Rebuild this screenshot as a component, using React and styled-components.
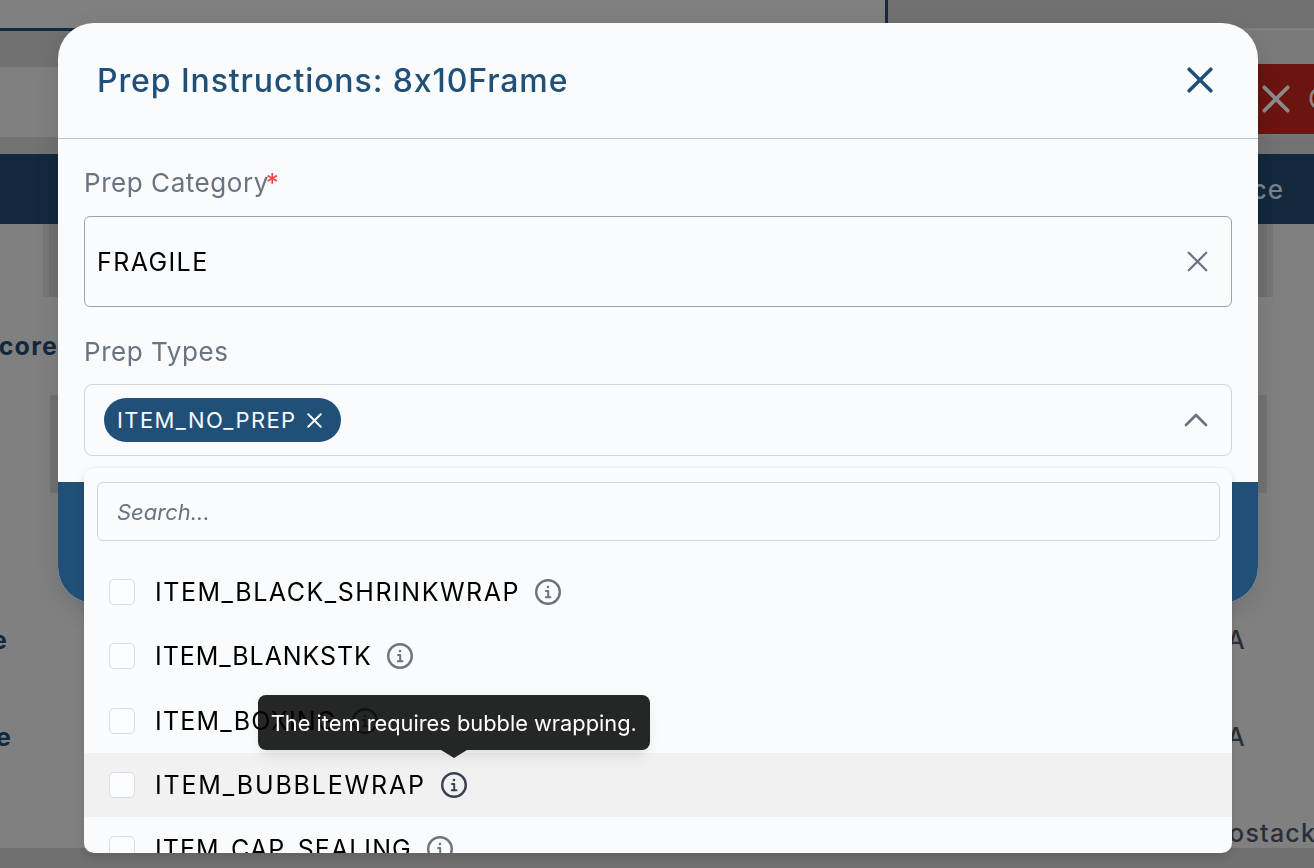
import React from 'react'
import styled, { createGlobalStyle } from 'styled-components'

const GlobalStyle = createGlobalStyle`
  html, body {
    margin: 0;
    height: 100%;
    overflow: hidden;
    background: #808080;
    font-family: Inter, "Liberation Sans", sans-serif;
  }
`

const Page = styled.div`
  width: 1314px;
  height: 868px;
  overflow: hidden;
  display: flex;
  flex-direction: column;
  background: #808080;
`

const TopStrip = styled.div`
  height: 28px;
  display: grid;
  grid-template-columns: 885px 3px 1fr;
  flex: none;
`
const TopLeft = styled.div`
  background: #808080;
`
const TopDivider = styled.div`
  background: #132a40;
`
const TopRight = styled.div`
  background: #717171;
`
const NavLine = styled.div`
  height: 3px;
  width: 200px;
  background: #132a40;
  flex: none;
`
const Band = styled.div`
  height: ${p => p.$h}px;
  background: ${p => p.$bg || '#808080'};
  flex: none;
`
const Toolbar = styled.div`
  height: 70px;
  flex: none;
  display: flex;
  justify-content: flex-end;
  align-items: flex-start;
  background: #808080;
`
const DangerButton = styled.div`
  width: 120px;
  height: 73px;
  margin-top: -3px;
  box-sizing: border-box;
  border-bottom: 3px solid #757575;
  background: #6b1410;
  color: #8a8a8a;
  display: flex;
  align-items: center;
  gap: 18px;
  padding-left: 68px;
  font-size: 28px;
  overflow: hidden;
  white-space: nowrap;
  svg {
    flex: none;
  }
`
const HeaderBand = styled.div`
  height: 70px;
  flex: none;
  background: #12283c;
  color: #77818b;
  font-size: 26px;
  font-weight: 500;
  letter-spacing: 1px;
  display: flex;
  align-items: center;
  justify-content: flex-end;
  padding-right: 30px;
`
const ShadeBar = styled.div`
  height: ${p => p.$h}px;
  margin: 0 ${p => p.$right}px 0 ${p => p.$left}px;
  background: ${p => p.$bg};
  border-left: 6px solid ${p => p.$edge};
  border-right: 6px solid ${p => p.$edge};
  flex: none;
`
const TableRow = styled.div`
  height: ${p => p.$h}px;
  flex: none;
  display: grid;
  grid-template-columns: 58px 1139px 1fr;
  align-items: ${p => p.$align || 'center'};
`
const RowHead = styled.div`
  display: flex;
  justify-content: flex-end;
  overflow: hidden;
  white-space: nowrap;
  font-size: 25px;
  font-weight: 700;
  letter-spacing: 1.2px;
  color: #12283c;
  padding-right: ${p => p.$pad || 0}px;
`
const RowTail = styled.div`
  grid-column: 3;
  overflow: hidden;
  white-space: nowrap;
  font-size: 25px;
  line-height: 30px;
  font-weight: 500;
  letter-spacing: 1.2px;
  color: #2b2f35;
  padding-left: ${p => p.$pad || 0}px;
`
const BottomBand = styled.div`
  flex: 1;
  background: #6f6f6f;
`

const Overlay = styled.div`
  position: fixed;
  inset: 0;
  box-sizing: border-box;
  display: flex;
  justify-content: center;
  align-items: flex-start;
  padding: 23px 0 0 2px;
`
const Modal = styled.div`
  width: 1200px;
  height: 580px;
  box-sizing: border-box;
  background: #f9fbfd;
  border-radius: 36px;
  display: flex;
  flex-direction: column;
  box-shadow: 0 8px 24px rgba(0, 0, 0, 0.12);
`
const ModalHeader = styled.div`
  height: 116px;
  flex: none;
  box-sizing: border-box;
  border-bottom: 1px solid #b3c5d3;
  display: flex;
  align-items: center;
  justify-content: space-between;
  padding: 0 45px 1px 39px;
`
const Title = styled.h2`
  margin: 0;
  font-size: 32px;
  font-weight: 500;
  letter-spacing: 0.9px;
  color: #205078;
`
const CloseButton = styled.button`
  border: 0;
  padding: 0;
  background: none;
  display: flex;
  color: #205078;
`
const ModalBody = styled.div`
  flex: 1;
  padding: 27px 26px 0;
  display: flex;
  flex-direction: column;
`
const Label = styled.label`
  font-size: 26px;
  line-height: 34px;
  color: #6b7280;
  margin-bottom: ${p => p.$gap}px;
  letter-spacing: 0.55px;
`
const Required = styled.span`
  color: #ef4444;
  margin-left: -3px;
`
const TextField = styled.div`
  height: 91px;
  box-sizing: border-box;
  border: 1px solid #9ca3af;
  border-radius: 6px;
  display: flex;
  align-items: center;
  justify-content: space-between;
  padding: 0 23px 0 12px;
  margin-bottom: 28px;
  font-size: 25px;
  color: #000;
  flex: none;
`
const FieldIcon = styled.span`
  display: flex;
  color: #6b7280;
`
const SelectWrap = styled.div`
  position: relative;
`
const SelectBox = styled.div`
  height: 72px;
  box-sizing: border-box;
  border: 1px solid #d1d5db;
  border-radius: 8px;
  display: flex;
  align-items: center;
  justify-content: space-between;
  padding: 0 23px 0 19px;
`
const Chip = styled.div`
  height: 44px;
  width: 237px;
  box-sizing: border-box;
  border-radius: 22px;
  background: #205078;
  color: #f9fbfd;
  font-size: 22px;
  display: flex;
  align-items: center;
  gap: 10px;
  padding: 0 16px 0 13px;
  white-space: nowrap;
`
const ModalFooter = styled.div`
  height: 121px;
  flex: none;
  background: #205078;
  border-radius: 0 0 36px 36px;
`

const Dropdown = styled.div`
  position: absolute;
  top: 83px;
  left: 0;
  right: 0;
  height: 386px;
  box-sizing: border-box;
  background: #f9fbfd;
  border-radius: 10px;
  border-top: 1px solid #eef0f3;
  box-shadow: 0 4px 8px rgba(0, 0, 0, 0.12);
  overflow: hidden;
`
const SearchBox = styled.div`
  height: 59px;
  box-sizing: border-box;
  margin: 14px 12px 19px 13px;
  border: 1px solid #d1d5db;
  border-radius: 6px;
  display: flex;
  align-items: center;
  padding-left: 19px;
  font-size: 22px;
  font-style: italic;
  color: #6b7280;
`
const Option = styled.div`
  height: 64.33px;
  box-sizing: border-box;
  padding-left: 25px;
  display: flex;
  align-items: center;
  background: ${p => (p.$active ? '#f1f1f1' : 'transparent')};
  color: #000;
  font-size: 25px;
`
const Check = styled.span`
  width: 26px;
  height: 26px;
  box-sizing: border-box;
  border: 1px solid #d9dce1;
  border-radius: 5px;
  background: #fbfcfd;
  margin-right: 20px;
  flex: none;
`
const InfoWrap = styled.span`
  position: relative;
  display: flex;
  margin-left: 14px;
  color: ${p => (p.$active ? '#374151' : '#6b7280')};
`
const Tooltip = styled.div`
  position: absolute;
  left: 50%;
  bottom: 49px;
  transform: translateX(-50%);
  width: 392px;
  height: 55px;
  box-sizing: border-box;
  border-radius: 8px;
  background: rgba(0, 0, 0, 0.85);
  color: #fff;
  font-size: 21.8px;
  display: flex;
  align-items: center;
  justify-content: center;
  white-space: nowrap;
  box-shadow: 0 10px 15px -3px rgba(0, 0, 0, 0.08), 0 4px 6px -4px rgba(0, 0, 0, 0.08), 0 0 14px rgba(0, 0, 0, 0.03);
  &::after {
    content: '';
    position: absolute;
    left: 50%;
    top: 100%;
    margin-left: -13px;
    border-style: solid;
    border-width: 8px 13px 0;
    border-color: #262626 transparent transparent;
  }
`
const Text = styled.span`
  letter-spacing: ${p => p.$ls}px;
`

const Cross = ({ size, width }) => (
  <svg width={size} height={size} viewBox="0 0 24 24" fill="none" stroke="currentColor" strokeWidth={width} strokeLinecap="round">
    <path d="M2 2 22 22M22 2 2 22" />
  </svg>
)

const Chevron = () => (
  <svg width="24" height="14" viewBox="0 0 24 14" fill="none" stroke="#6b7280" strokeWidth="2.8" strokeLinecap="round" strokeLinejoin="round">
    <path d="M2 12 12 2l10 10" />
  </svg>
)

const InfoIcon = () => (
  <svg width="28" height="28" viewBox="0 0 28 28" fill="none" stroke="currentColor" strokeWidth="2.4" strokeLinecap="round" strokeLinejoin="round">
    <circle cx="14" cy="14" r="11.8" />
    <path d="M12 13h2.2v6M11.8 19.2h4.6" strokeWidth="2" />
    <circle cx="14" cy="9" r="0.7" fill="currentColor" strokeWidth="1.2" />
  </svg>
)

// spacing per option: the stand-in font is narrower than the one in the design
const options = [
  { name: 'ITEM_BLACK_SHRINKWRAP', ls: 1.52 },
  { name: 'ITEM_BLANKSTK', ls: 0.92 },
  { name: 'ITEM_BOXING', ls: 1.19 },
  { name: 'ITEM_BUBBLEWRAP', ls: 1.82, active: true, tip: 'The item requires bubble wrapping.' },
  { name: 'ITEM_CAP_SEALING', ls: 1.05 },
]

export default function App() {
  return (
    <>
      <GlobalStyle />
      <Page>
        <TopStrip>
          <TopLeft />
          <TopDivider />
          <TopRight />
        </TopStrip>
        <NavLine />
        <Band $h={36} $bg="linear-gradient(to right, #717171 50%, #7a7a7a 50%)" />
        <Toolbar>
          <DangerButton>
            <Cross size={28} width={3.2} />
            <span>Cancel</span>
          </DangerButton>
        </Toolbar>
        <Band $h={17} $bg="#727272" />
        <HeaderBand>Service</HeaderBand>
        <ShadeBar $h={73} $bg="#707070" $edge="#777" $left={43} $right={41} />
        <TableRow $h={98}>
          <RowHead>Score</RowHead>
        </TableRow>
        <ShadeBar $h={98} $bg="#737373" $edge="#737373" $left={50} $right={47} />
        <TableRow $h={98} />
        <TableRow $h={98}>
          <RowHead $pad={50}>Store</RowHead>
          <RowTail>N/A</RowTail>
        </TableRow>
        <TableRow $h={96}>
          <RowHead $pad={46}>Store</RowHead>
          <RowTail>N/A</RowTail>
        </TableRow>
        <TableRow $h={63} $align="end">
          <RowTail $pad={12}>Nostack</RowTail>
        </TableRow>
        <BottomBand />
      </Page>
      <Overlay>
        <Modal>
          <ModalHeader>
            <Title>Prep Instructions: 8x10Frame</Title>
            <CloseButton>
              <Cross size={26} width={3.3} />
            </CloseButton>
          </ModalHeader>
          <ModalBody>
            <Label $gap={16}>
              Prep Category<Required>*</Required>
            </Label>
            <TextField>
              <Text $ls={1.4}>FRAGILE</Text>
              <FieldIcon>
                <Cross size={21} width={2.6} />
              </FieldIcon>
            </TextField>
            <Label $gap={15}>Prep Types</Label>
            <SelectWrap>
              <SelectBox>
                <Chip>
                  <Text $ls={1.4}>ITEM_NO_PREP</Text>
                  <Cross size={15} width={3.2} />
                </Chip>
                <Chevron />
              </SelectBox>
              <Dropdown>
                <SearchBox>Search...</SearchBox>
                {options.map(o => (
                  <Option key={o.name} $active={o.active}>
                    <Check />
                    <Text $ls={o.ls}>{o.name}</Text>
                    <InfoWrap $active={o.active}>
                      <InfoIcon />
                      {o.tip && <Tooltip>{o.tip}</Tooltip>}
                    </InfoWrap>
                  </Option>
                ))}
              </Dropdown>
            </SelectWrap>
          </ModalBody>
          <ModalFooter />
        </Modal>
      </Overlay>
    </>
  )
}
